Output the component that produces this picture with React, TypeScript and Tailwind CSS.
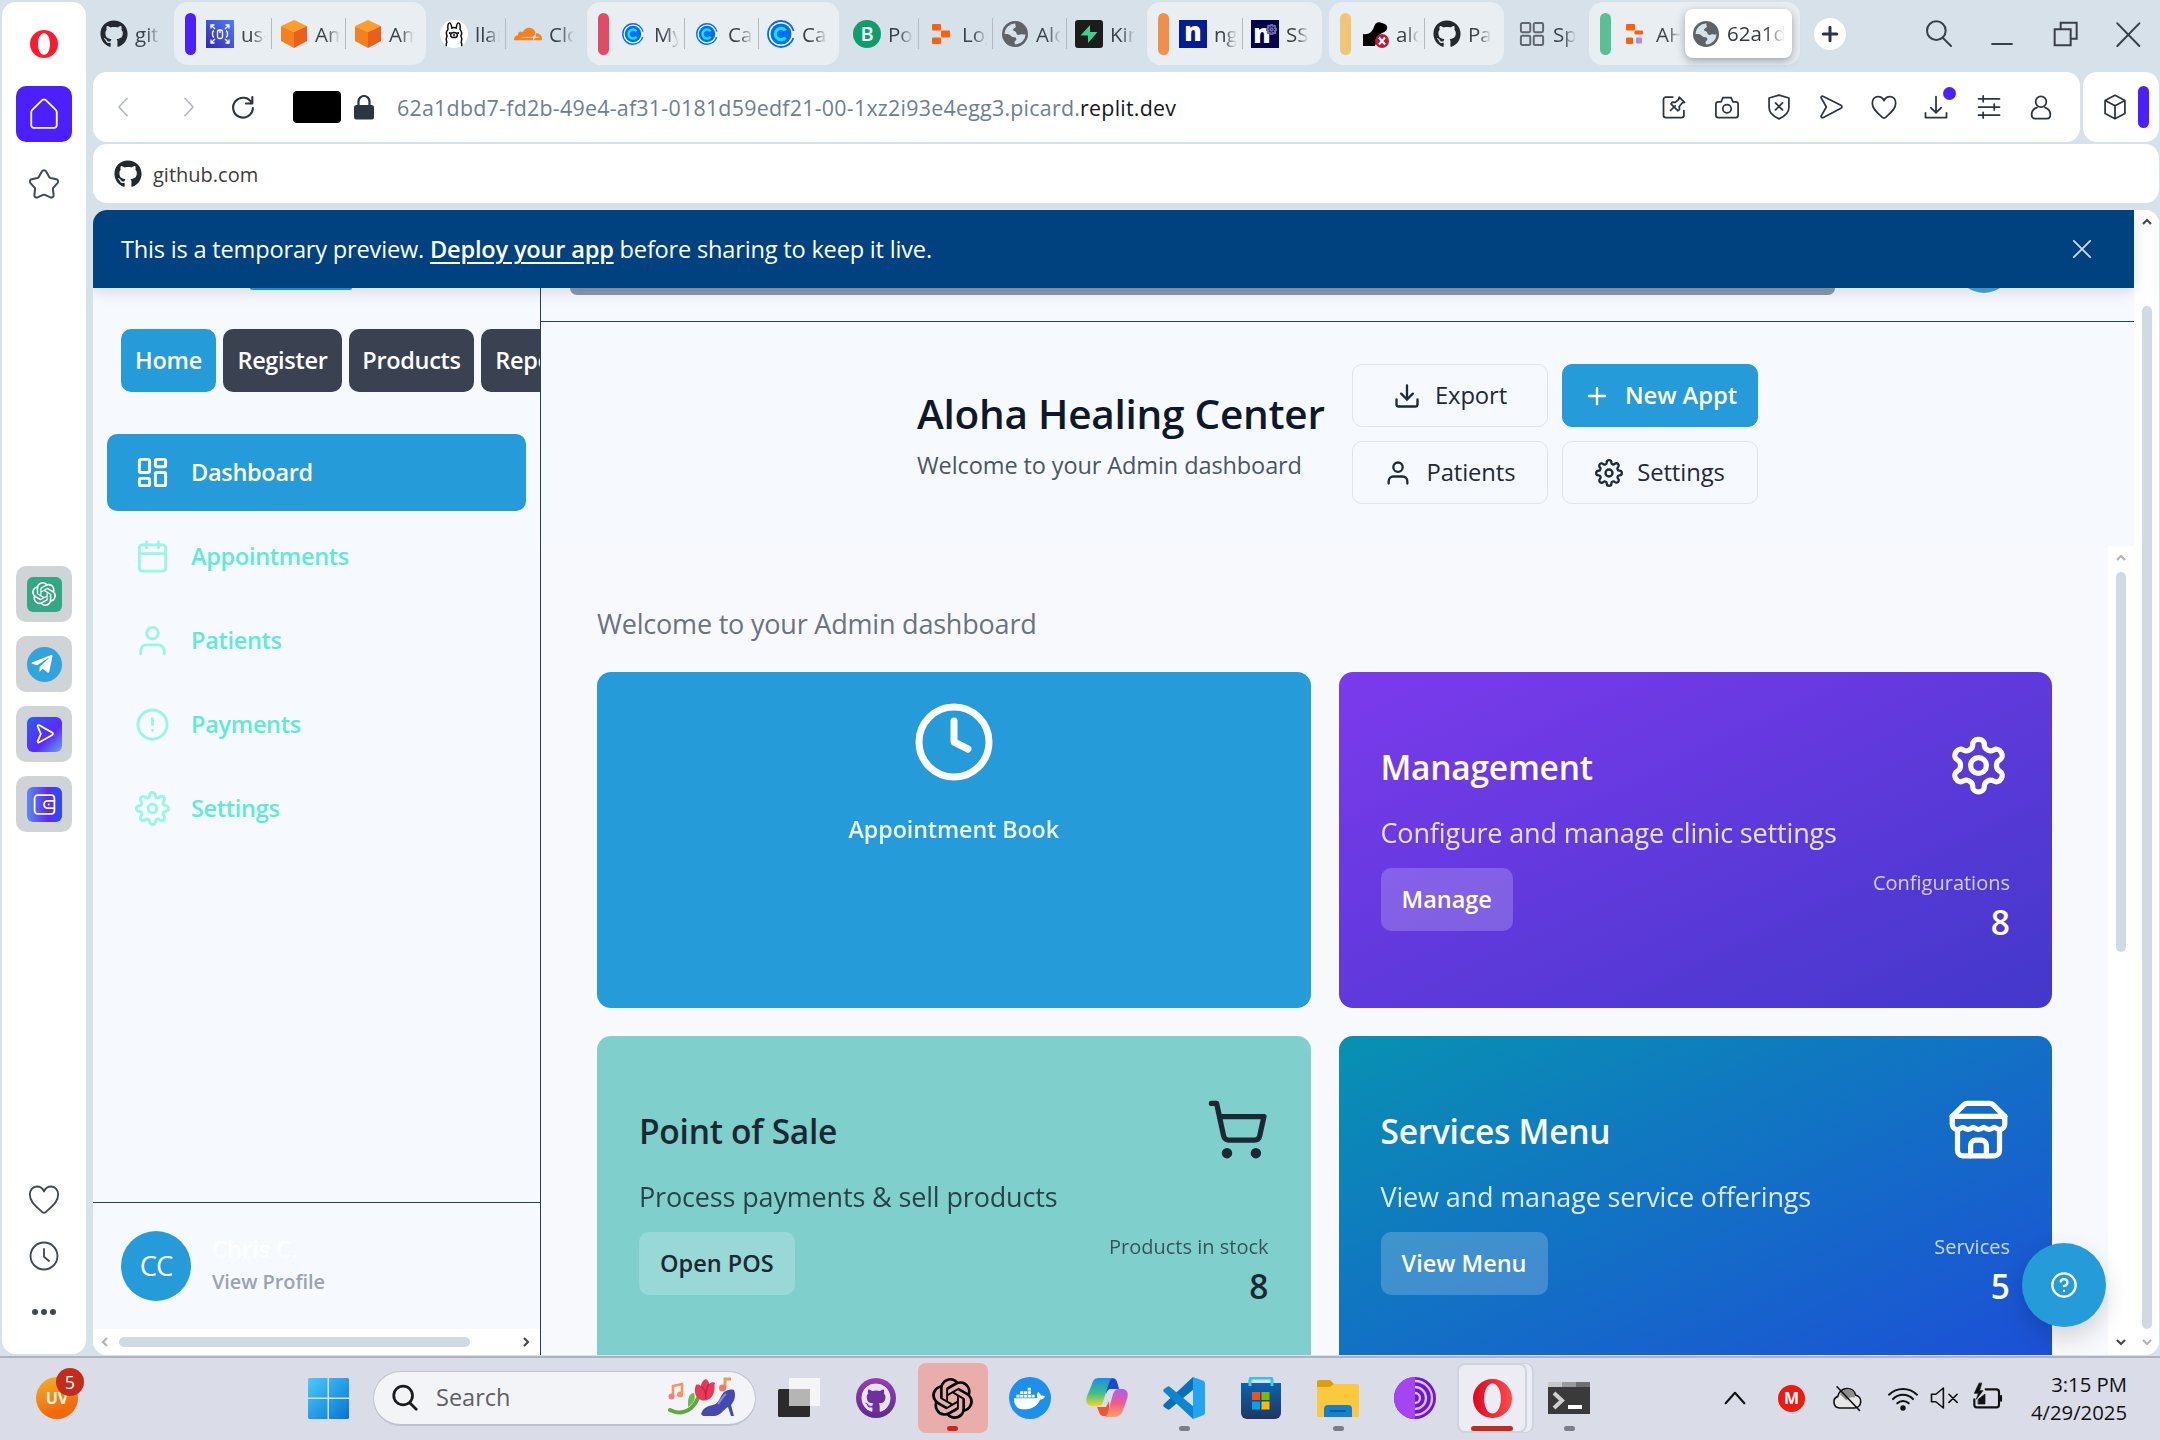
import React from "react";
import { LayoutDashboard, ShoppingCart, Clock } from "lucide-react";
import { FiSettings, FiCalendar, FiUser, FiAlertCircle, FiDownload, FiPlus, FiHelpCircle } from "react-icons/fi";
import { FaGithub, FaTelegramPlane, FaDocker } from "react-icons/fa";
import { SiOpenai, SiCloudflare } from "react-icons/si";

type Kids = { children?: React.ReactNode; className?: string };

/* ---------- generic line icon ---------- */
function Line({ size = 28, w = 1.5, children, className = "", box = "0 0 24 24" }: Kids & { size?: number; w?: number; box?: string }) {
  return (
    <svg width={size} height={size} viewBox={box} fill="none" stroke="currentColor" strokeWidth={w} strokeLinecap="round" strokeLinejoin="round" className={"shrink-0 " + className}>
      {children}
    </svg>
  );
}

/* ---------- favicons ---------- */
const Octo = () => <FaGithub size={28} className="text-[#24292f]" />;

const AwsChip = () => (
  <svg width="28" height="28" viewBox="0 0 28 28">
    <defs>
      <linearGradient id="chip" x1="0" y1="1" x2="1" y2="0">
        <stop offset="0" stopColor="#2e27ad" />
        <stop offset="1" stopColor="#527fff" />
      </linearGradient>
    </defs>
    <rect width="28" height="28" fill="url(#chip)" />
    <g fill="none" stroke="#fff" strokeWidth="1.3">
      <path d="M5 8.500V5h3.500M5 5l4 4M19.500 5H23v3.500M23 5l-4 4M5 19.500V23h3.500M5 23l4-4M23 19.500V23h-3.500M23 23l-4-4" />
      <rect x="11.500" y="10" width="5" height="8.500" rx="1.800" />
      <path d="M8 11c-1.500 0-1.500 1-1.500 3s0 3 1.500 3M20 11c1.500 0 1.500 1 1.500 3s0 3-1.500 3M14 10v3" />
    </g>
  </svg>
);

const AwsCube = () => (
  <svg width="28" height="28" viewBox="0 0 28 28">
    <path d="M14 0l13 6-13 6L1 6z" fill="#ff9d2b" />
    <path d="M1 6l13 6v16L1 21z" fill="#f58020" />
    <path d="M27 6l-13 6v16l13-7z" fill="#ec5e1c" />
  </svg>
);

const Llama = () => (
  <svg width="28" height="28" viewBox="0 0 28 28">
    <circle cx="14" cy="14" r="14" fill="#fff" />
    <g fill="none" stroke="#111" strokeWidth="1.500" strokeLinecap="round">
      <path d="M8 9.500C7.500 6 8 3 9.500 3s2 2.500 2.300 5c1.300-.7 3-.7 4.400 0 .3-2.500.8-5 2.300-5s2 3 1.500 6.500c1.700 1.700 2 4.300.9 6.300 1.200 2.200 1.200 4.600.3 6.600.5 1 .7 2 .5 3.200M8 9.500c-1.700 1.700-2 4.300-.9 6.300-1.200 2.200-1.200 4.600-.3 6.600-.5 1-.7 2-.5 3.200" />
      <ellipse cx="14" cy="15" rx="3.400" ry="2.600" />
      <path d="M14 14.500v1.200" />
    </g>
    <circle cx="9.800" cy="13" r="1" />
    <circle cx="18.200" cy="13" r="1" />
  </svg>
);

function Cal({ size }: { size: number }) {
  return (
    <svg width={size} height={size} viewBox="0 0 28 28">
      <circle cx="14" cy="14" r="13" fill="#fff" stroke="#006bff" strokeWidth="1.800" strokeDasharray="74 8" strokeDashoffset="-4" />
      <circle cx="14" cy="14" r="10.500" fill="#006bff" />
      <path d="M18.500 10.500a5.700 5.700 0 1 0 0 7" fill="none" stroke="#0ae8f0" strokeWidth="3.200" />
    </svg>
  );
}

const BDot = () => <span className="grid size-7 place-items-center rounded-full bg-[#0f9d6c] text-[20px] leading-none font-semibold text-white">B</span>;

function Replit({ purple = false }: { purple?: boolean }) {
  return (
    <svg width="28" height="28" viewBox="0 0 28 28" fill="#ff5f0a">
      <rect x="5" y="4" width="9" height="6.500" rx="1" />
      <rect x={purple ? 13.5 : 14} y="10.500" width={purple ? 8.5 : 9} height={purple ? 4 : 7} rx="1" />
      <rect x="5" y="17.500" width={purple ? 7 : 9} height="6.500" rx="1" />
      {purple && <rect x="15" y="17.500" width="6" height="6" rx="1" fill="#a78bfa" />}
    </svg>
  );
}

const Globe = () => (
  <svg width="26" height="26" viewBox="0 0 24 24">
    <circle cx="12" cy="12" r="12" fill="#5f6368" />
    <path d="M12.500 2.300c-.8 1.500.6 2 .2 3.200-.5 1.300-2.700 1.200-2.500 2.800.1 1.200 2 .8 2.700 1.900.6 1 .2 2.200 1.500 2.600 1.600.4 3-.9 5-.3.9.2 1.600.2 2.300-.5A9.700 9.700 0 0 1 12.400 21.700c-.9-1.200-1.600-2 .3-3.600 1-.9.6-2.600-.6-3-1.600-.6-2.900-.1-4-1.600-.9-1.200-2.500-1.600-5.700-1.500A9.700 9.700 0 0 1 12.500 2.300z" fill="#d7e1ea" />
  </svg>
);

const Bolt = () => (
  <svg width="28" height="28" viewBox="0 0 28 28">
    <rect width="28" height="28" rx="3" fill="#1c1c1c" />
    <path d="M15 5L5.500 15.500H13V23l9.500-11H15z" fill="#3ecf8e" />
  </svg>
);

const NBox = ({ gear = false }: { gear?: boolean }) => (
  <span className={"relative flex size-7 justify-center " + (gear ? "bg-[#030050]" : "bg-[#051d94]")}>
    <span className={"text-[26px] leading-[22px] font-extrabold text-white " + (gear ? "mt-0.5 -ml-1.5" : "")}>n</span>
    {gear && <FiSettings size={11} className="absolute top-1 right-0.5 text-[#6a69a8]" strokeWidth={4} />}
  </span>
);

const AlohaFav = () => (
  <svg width="28" height="28" viewBox="0 0 28 28">
    <path d="M2 26V14c6 1 9-2 11-7 1-4 4-6 8-4 4 1 6 3 5 6-1 4-7 3-9 8-1 3-2 6-3 9z" fill="#000" />
    <circle cx="21" cy="21" r="7" fill="#b91c3a" />
    <path d="M18 17.500l6 7M24 17.500l-6 7" stroke="#fff" strokeWidth="2" />
  </svg>
);

const Grid4 = () => (
  <Line size={28} w={1.7} className="text-[#5f666d]">
    <rect x="2.500" y="2.500" width="8" height="8" rx="1.200" />
    <rect x="13.500" y="2.500" width="8" height="8" rx="1.200" />
    <rect x="2.500" y="13.500" width="8" height="8" rx="1.200" />
    <rect x="13.500" y="13.500" width="8" height="8" rx="1.200" />
  </Line>
);

/* ---------- tab strip ---------- */
function Tab({ icon, label, className = "w-[60px]" }: { icon: React.ReactNode; label: string; className?: string }) {
  return (
    <div className={"flex h-8 shrink-0 items-center gap-[7px] " + className}>
      <span className="grid size-7 shrink-0 place-items-center">{icon}</span>
      <span className="min-w-0 flex-1 overflow-hidden text-[20.5px] leading-8 whitespace-nowrap text-[#3a4249] [mask-image:linear-gradient(to_right,black_45%,transparent)]">{label}</span>
    </div>
  );
}
const Sep = () => <span className="mr-2 ml-[5px] h-[31px] w-px shrink-0 bg-[#b3bac1]" />;

function Group({ color, className = "", children }: Kids & { color: string }) {
  return (
    <div className={"flex h-[63px] shrink-0 items-center rounded-[14px] bg-[#e9eef3] pl-[11px] " + className}>
      <span className={"mr-2.5 h-[42px] w-[11px] shrink-0 rounded-full " + color} />
      {children}
    </div>
  );
}

function TabStrip() {
  return (
    <div className="flex h-[72px] items-start pt-0.5 pl-[7px]">
      <div className="flex h-[63px] items-center">
        <Tab icon={<Octo />} label="gith" />
        <Group color="bg-[#4c1fff]" className="ml-3.5 w-[252px]">
          <Tab icon={<AwsChip />} label="us-" />
          <Sep />
          <Tab icon={<AwsCube />} label="Am" />
          <Sep />
          <Tab icon={<AwsCube />} label="Am" />
        </Group>
        <div className="flex items-center pl-3.5">
          <Tab icon={<Llama />} label="llam" />
          <Sep />
          <Tab icon={<SiCloudflare size={28} className="text-[#f6821f]" />} label="Clou" />
        </div>
        <Group color="bg-[#e04c63]" className="ml-[13px] w-[252px]">
          <Tab icon={<Cal size={22} />} label="My" />
          <Sep />
          <Tab icon={<Cal size={22} />} label="Cal" />
          <Sep />
          <Tab icon={<Cal size={28} />} label="Cal" />
        </Group>
        <div className="flex items-center pl-3.5">
          <Tab icon={<BDot />} label="Po" />
          <Sep />
          <Tab icon={<Replit />} label="Log" />
          <Sep />
          <Tab icon={<Globe />} label="Alo" />
          <Sep />
          <Tab icon={<Bolt />} label="Kin" />
        </div>
        <Group color="bg-[#f08f4c]" className="ml-3 w-[175px]">
          <Tab icon={<NBox />} label="ng" className="w-[58px]" />
          <Sep />
          <Tab icon={<NBox gear />} label="SS" className="w-[58px]" />
        </Group>
        <Group color="bg-[#efc677]" className="ml-[7px] w-[175px]">
          <Tab icon={<AlohaFav />} label="alo" className="w-[58px]" />
          <Sep />
          <Tab icon={<Octo />} label="Pa" className="w-[58px]" />
        </Group>
        <div className="pl-3.5">
          <Tab icon={<Grid4 />} label="Sp" className="w-[58px]" />
        </div>
        <Group color="bg-[#57c096]" className="ml-[13px] w-[211px]">
          <Tab icon={<Replit purple />} label="AH" className="w-[60px]" />
          <div className="ml-1 flex h-[49px] w-[107px] shrink-0 items-center gap-2 rounded-lg bg-white pl-2 shadow-[0_3px_8px_rgba(60,70,80,0.45)]">
            <Globe />
            <span className="w-[58px] overflow-hidden text-[20.5px] whitespace-nowrap text-[#33393f] [mask-image:linear-gradient(to_right,black_65%,transparent)]">62a1dbd</span>
          </div>
        </Group>
        <span className="ml-3.5 grid size-8 place-items-center rounded-full bg-white text-[#2b3640]">
          <Line size={18} w={4}>
            <path d="M12 3v18M3 12h18" />
          </Line>
        </span>
        <div className="ml-[77px] flex items-center text-[#3a3f45]">
          <Line size={32} w={1.5}>
            <circle cx="10" cy="9.500" r="7" />
            <path d="M15 15l6 6" />
          </Line>
          <Line size={32} w={1.5} className="ml-[31px]">
            <path d="M4 19.500h16" strokeLinecap="butt" />
          </Line>
          <Line size={32} w={1.5} className="ml-8">
            <path d="M3.500 8.500h12v12h-12zM8 8.500v-5h12v12h-4.500" strokeLinejoin="miter" />
          </Line>
          <Line size={32} w={1.5} className="ml-[30px]">
            <path d="M4 4l16.500 17M20.500 4L4 21" />
          </Line>
        </div>
      </div>
    </div>
  );
}

/* ---------- address bar ---------- */
function AddressBar() {
  return (
    <div className="flex h-[70px] gap-[3px]">
      <div className="flex w-[1987px] items-center rounded-[14px] bg-white pl-4 text-[#2b3640]">
        <Line size={28} w={1.4} className="text-[#b4b9be]">
          <path d="M15.500 4.500L8.500 12l7 7.500" />
        </Line>
        <Line size={28} w={1.4} className="ml-[38px] text-[#b4b9be]">
          <path d="M8.500 4.500l7 7.500-7 7.500" />
        </Line>
        <Line size={28} w={1.8} className="ml-[26px]">
          <path d="M19.500 8.500A8.500 8.500 0 1 0 20.500 13M20 3.500V9h-5.500" />
        </Line>
        <span className="ml-9 h-8 w-12 rounded-[4px] bg-black" />
        <svg width="20" height="25" viewBox="0 0 20 25" className="ml-[13px]" fill="none">
          <rect y="10" width="20" height="14.500" rx="2.500" fill="#2b3640" />
          <path d="M4.500 11V6.500a5.500 5.500 0 0 1 11 0V11" stroke="#2b3640" strokeWidth="2.200" />
        </svg>
        <span className="ml-[23px] flex-1 pt-0.5 text-[21.4px] leading-[30px] tracking-[0.25px] whitespace-nowrap text-[#6d8091]">
          62a1dbd7-fd2b-49e4-af31-0181d59edf21-00-1xz2i93e4egg3.picard.<span className="text-[#15181c]">replit.dev</span>
        </span>
        <div className="flex items-center gap-[24.4px] pr-[25px]">
          <Line>
            <path d="M11 3.500H5a2 2 0 0 0-2 2V19a2 2 0 0 0 2 2h13.500a2 2 0 0 0 2-2v-4M9 15l4-4M16.500 3.500l4.500 4.500-2 .6-2.500 3 .2 2.600-1.500 1-5.800-5.800 1-1.500 2.600.2 3-2.500z" />
          </Line>
          <Line>
            <path d="M2.500 9.500a2 2 0 0 1 2-2H7l1.500-3.500h7L17 7.500h2.500a2 2 0 0 1 2 2V19a2 2 0 0 1-2 2h-15a2 2 0 0 1-2-2z" />
            <circle cx="12" cy="13.500" r="3.600" />
          </Line>
          <Line>
            <path d="M12 1.800l8.500 2.500v8.200c0 4-3.500 7.500-8.500 9.700-5-2.200-8.500-5.700-8.500-9.700V4.300zM9 8.500l6 6M15 8.500l-6 6" />
          </Line>
          <Line>
            <path d="M3.500 4c0-1.200 1-1.500 2-1l15 7.500c1.200.7 1.200 1.800 0 2.500l-15 8c-1.200.5-2 0-2-1.200L8 12z" />
          </Line>
          <Line>
            <path d="M12 6.500C11 4 9.300 3 7 3 4 3 2 5.500 2 8.700 2 14 6.500 17 10.500 20.800a2 2 0 0 0 3 0C17.500 17 22 14 22 8.700 22 5.500 20 3 17 3c-2.300 0-4 1-5 3.500z" />
          </Line>
          <span className="relative">
            <Line>
              <path d="M12 3v13.500M7.500 12.500L12 17l4.500-4.500M3 17v4h18v-4" />
            </Line>
            <span className="absolute -top-1.5 -right-1.5 size-[13px] rounded-full bg-[#4c1fff]" />
          </span>
          <Line>
            <path d="M3 5h18M3 12h18M3 19h18M7 2.500v5M16.500 9.500v5M7 16.500v5" />
          </Line>
          <Line>
            <circle cx="12" cy="7.500" r="4.600" />
            <path d="M8.500 12.500C5.500 13.500 4 16 4 18.500 4 20.500 5 22 7 22h10c2 0 3-1.500 3-3.500 0-2.500-1.500-5-4.500-6" />
          </Line>
        </div>
      </div>
      <div className="flex flex-1 items-center rounded-[14px] bg-white pl-[18px] text-[#2b3640]">
        <Line>
          <path d="M12 2l8.500 4.500v11L12 22l-8.500-4.500v-11zM3.500 6.500L12 11l8.500-4.500M12 11v11" />
        </Line>
        <span className="ml-[9px] h-[42px] w-[11px] rounded-full bg-[#4c1fff]" />
      </div>
    </div>
  );
}

/* ---------- browser side rail ---------- */
function Opera({ size, from = "#ff1b2d", to = "#ff1b2d" }: { size: number; from?: string; to?: string }) {
  const id = "op" + size;
  return (
    <svg width={size} height={size} viewBox="0 0 28 28">
      <defs>
        <linearGradient id={id}>
          <stop offset="0" stopColor={from} />
          <stop offset="1" stopColor={to} />
        </linearGradient>
      </defs>
      <path fillRule="evenodd" fill={`url(#${id})`} d="M14 0a14 14 0 1 0 0 28 14 14 0 1 0 0-28zm0 3.200c3.700 0 6 5 6 10.800s-2.300 10.800-6 10.800-6-5-6-10.800 2.300-10.800 6-10.800z" />
    </svg>
  );
}

const AppTile = ({ children, className = "" }: Kids) => (
  <span className="grid size-14 place-items-center rounded-[10px] bg-[#d0d4d7]">
    <span className={"grid size-[35px] place-items-center text-white " + className}>{children}</span>
  </span>
);

function Rail() {
  return (
    <div className="mt-0.5 ml-0.5 flex h-[1352px] w-[84px] shrink-0 flex-col items-center rounded-[14px] bg-white pt-7 text-[#3f4a54]">
      <Opera size={28} />
      <span className="mt-7 grid size-14 place-items-center rounded-[10px] bg-[#4c1fff] text-white">
        <Line size={34} w={1.3}>
          <path d="M3 10.800a2.500 2.500 0 0 1 .7-1.700l7-6.900a1.800 1.800 0 0 1 2.600 0l7 6.900a2.500 2.500 0 0 1 .7 1.700V20a1.800 1.800 0 0 1-1.800 1.800H4.800A1.800 1.800 0 0 1 3 20z" />
        </Line>
      </span>
      <Line size={34} w={1.4} className="mt-[25px]">
        <path d="M10.500 3.200a1.700 1.700 0 0 1 3 0l2.200 3.900c.2.400.6.600 1 .7l4 .9a1.600 1.600 0 0 1 .8 2.700l-2.800 3.100c-.3.300-.4.700-.4 1.100l.5 4.200a1.600 1.600 0 0 1-2.300 1.600L12.700 19.700a1.700 1.700 0 0 0-1.400 0L7.500 21.400a1.600 1.600 0 0 1-2.300-1.600l.5-4.200c0-.4-.1-.8-.4-1.100L2.500 11.400a1.600 1.600 0 0 1 .8-2.700l4-.9c.4-.1.800-.3 1-.7z" />
      </Line>
      <div className="mt-[365px] flex flex-col gap-3.5">
        <AppTile className="rounded-md bg-[#35a785]">
          <SiOpenai size={24} />
        </AppTile>
        <AppTile className="rounded-full bg-[#32a4dd]">
          <FaTelegramPlane size={24} className="-ml-1" />
        </AppTile>
        <AppTile className="rounded-md bg-[linear-gradient(135deg,#2a5bff,#5a2bf5_60%,#6aa6f5)]">
          <Line size={22} w={2}>
            <path d="M5 3.500c0-1.200 1-1.500 2-1l14 8c1 .6 1 1.900 0 2.500l-14 8c-1 .5-2 .2-2-1L8.500 12z" />
          </Line>
        </AppTile>
        <AppTile className="rounded-md bg-[linear-gradient(90deg,#5a8bf5,#5a2bf5_60%,#2a4bff)]">
          <Line size={25} w={1.7}>
            <rect x="2.500" y="3" width="19" height="18" rx="3" />
            <path d="M21.500 8.500H15a3.500 3.500 0 0 0 0 7h6.500M16 12h.1" />
          </Line>
        </AppTile>
      </div>
      <Line size={34} w={1.3} className="mt-[351px]">
        <path d="M12 6C11 3.500 9.300 2.500 7 2.500 4 2.500 2 5 2 8.200c0 5.300 4.500 8.300 8.500 12.100a2 2 0 0 0 3 0c4-3.800 8.500-6.800 8.500-12.100 0-3.200-2-5.700-5-5.700-2.300 0-4 1-5 3.500z" />
      </Line>
      <Line size={34} w={1.3} className="mt-[22px]">
        <circle cx="12" cy="12" r="9.500" />
        <path d="M12 7v5.500l3.500 3" />
      </Line>
      <span className="mt-9 flex gap-[3px]">
        <i className="size-1.5 rounded-full bg-current" />
        <i className="size-1.5 rounded-full bg-current" />
        <i className="size-1.5 rounded-full bg-current" />
      </span>
    </div>
  );
}

/* ---------- app sidebar ---------- */
const Pill = ({ children, className = "" }: Kids) => (
  <span className={"grid h-[63px] shrink-0 place-items-center rounded-[10px] text-[23.5px] font-[650] tracking-[-0.3px] text-white " + className}>{children}</span>
);

function NavItem({ icon, label, active = false }: { icon: React.ReactNode; label: string; active?: boolean }) {
  return (
    <div className={"flex h-[77px] items-center gap-[21px] rounded-[10px] pl-7 text-[23.5px] font-[650] tracking-[-0.3px] " + (active ? "bg-[#269bda] text-white" : "text-[#5eead4]")}>
      <span className={active ? "text-white" : "text-[#99f6e4]"}>{icon}</span>
      {label}
    </div>
  );
}

const Caret = ({ d, className = "" }: { d: string; className?: string }) => (
  <svg width="10" height="10" viewBox="0 0 10 10" fill="none" stroke="currentColor" strokeWidth="2.200" className={className}>
    <path d={d} />
  </svg>
);

function AppSidebar() {
  return (
    <aside className="flex w-[448px] shrink-0 flex-col overflow-hidden border-r border-[#27405a] bg-[#f6fafe]">
      <div className="ml-[157px] h-[2px] w-[102px] shrink-0 rounded-b-md bg-[#269bda]" />
      <div className="mt-[39px] ml-7 flex shrink-0 gap-[7px]">
        <Pill className="w-[95px] bg-[#269bda]">Home</Pill>
        <Pill className="w-[119px] bg-[#3a4252]">Register</Pill>
        <Pill className="w-[125px] bg-[#3a4252]">Products</Pill>
        <Pill className="w-[115px] bg-[#3a4252]">Reports</Pill>
      </div>
      <nav className="mx-3.5 mt-[42px] flex flex-1 flex-col gap-[7px]">
        <NavItem active icon={<LayoutDashboard size={35} />} label="Dashboard" />
        <NavItem icon={<FiCalendar size={35} />} label="Appointments" />
        <NavItem icon={<FiUser size={35} />} label="Patients" />
        <NavItem icon={<FiAlertCircle size={35} />} label="Payments" />
        <NavItem icon={<FiSettings size={35} />} label="Settings" />
      </nav>
      <div className="flex h-[127px] shrink-0 items-center border-t border-[#27405a] pl-7">
        <span className="grid size-[70px] place-items-center rounded-full bg-[#269bda] text-[27.5px] tracking-[-1px] text-white">CC</span>
        <div className="ml-[21px] flex flex-col pb-1 font-semibold">
          <span className="text-[23.5px] leading-[35px] text-white">Chris C.</span>
          <span className="text-[20px] leading-[30px] tracking-[-0.1px] text-[#9ca3af]">View Profile</span>
        </div>
      </div>
      <div className="flex h-[26px] shrink-0 items-center bg-white pl-[7px]">
        <Caret d="M7 1L3 5l4 4" className="text-[#b4b4b4]" />
        <span className="ml-[9px] h-2.5 w-[351px] rounded-full bg-[#d0dae3]" />
        <Caret d="M3 1l4 4-4 4" className="ml-[51px] text-[#4a4a4a]" />
      </div>
    </aside>
  );
}

/* ---------- dashboard ---------- */
const HeadBtn = ({ children, className = "" }: Kids) => (
  <span className={"flex h-[63px] w-[196px] items-center justify-center gap-3.5 rounded-[10px] border text-[23.8px] tracking-[-0.1px] " + className}>{children}</span>
);

const GearLobes = () => (
  <Line size={63} w={2}>
    <path d="M12.220 2h-.44a2 2 0 0 0-2 2v.18a2 2 0 0 1-1 1.730l-.43.25a2 2 0 0 1-2 0l-.15-.08a2 2 0 0 0-2.730.73l-.22.38a2 2 0 0 0 .73 2.730l.15.1a2 2 0 0 1 1 1.720v.51a2 2 0 0 1-1 1.740l-.15.09a2 2 0 0 0-.73 2.730l.22.38a2 2 0 0 0 2.730.73l.15-.08a2 2 0 0 1 2 0l.43.25a2 2 0 0 1 1 1.730V20a2 2 0 0 0 2 2h.44a2 2 0 0 0 2-2v-.18a2 2 0 0 1 1-1.730l.43-.25a2 2 0 0 1 2 0l.15.08a2 2 0 0 0 2.730-.73l.22-.39a2 2 0 0 0-.73-2.730l-.15-.08a2 2 0 0 1-1-1.740v-.5a2 2 0 0 1 1-1.740l.15-.09a2 2 0 0 0 .73-2.730l-.22-.38a2 2 0 0 0-2.730-.73l-.15.08a2 2 0 0 1-2 0l-.43-.25a2 2 0 0 1-1-1.730V4a2 2 0 0 0-2-2z" />
    <circle cx="12" cy="12" r="3" />
  </Line>
);

const Shop = () => (
  <Line size={63} w={2}>
    <path d="m2 7 4.410-4.410A2 2 0 0 1 7.830 2h8.340a2 2 0 0 1 1.420.59L22 7" />
    <path d="M4 12v8a2 2 0 0 0 2 2h12a2 2 0 0 0 2-2v-8" />
    <path d="M15 22v-4a2 2 0 0 0-2-2h-2a2 2 0 0 0-2 2v4" />
    <path d="M2 7h20" />
    <path d="M22 7v3a2 2 0 0 1-2 2a2.700 2.700 0 0 1-1.590-.63.7.7 0 0 0-.82 0A2.700 2.700 0 0 1 16 12a2.700 2.700 0 0 1-1.590-.63.7.7 0 0 0-.82 0A2.700 2.700 0 0 1 12 12a2.700 2.700 0 0 1-1.590-.63.7.7 0 0 0-.82 0A2.700 2.700 0 0 1 8 12a2.700 2.700 0 0 1-1.590-.63.7.7 0 0 0-.82 0A2.700 2.700 0 0 1 4 12a2 2 0 0 1-2-2V7" />
  </Line>
);

function Card(p: { title: string; desc: string; button: string; stat: string; value: string; icon: React.ReactNode; className: string }) {
  return (
    <div className={"flex h-[336px] flex-col rounded-[14px] px-[42px] " + p.className}>
      <div className="mt-[62px] flex h-[63px] items-center justify-between">
        <h3 className="pt-1 text-[33.5px] leading-[49px] font-semibold tracking-[-0.25px]">{p.title}</h3>
        {p.icon}
      </div>
      <p className="mt-[15px] text-[27px] leading-[42px] tracking-[-0.15px] opacity-85">{p.desc}</p>
      <div className="mt-[14px] flex items-start justify-between">
        <span className="flex h-[63px] items-center rounded-[10px] bg-white/20 px-[21px] text-[23.5px] font-semibold">{p.button}</span>
        <div className="flex flex-col items-end">
          <span className="text-[20px] leading-[30px] opacity-75">{p.stat}</span>
          <span className="text-[33.5px] leading-[49px] font-semibold">{p.value}</span>
        </div>
      </div>
    </div>
  );
}

function Dashboard() {
  return (
    <main className="flex min-w-0 flex-1 flex-col bg-[#f8f9fc]">
      <div className="flex h-[34px] shrink-0 items-start border-b border-[#27405a] bg-[#f6fafe]">
        <span className="ml-[29px] h-[7px] w-[1265px] rounded-b-lg bg-[#8b9bad]" />
        <span className="ml-[126px] flex h-[5px] w-[45px] items-end justify-center overflow-hidden">
          <i className="size-14 shrink-0 rounded-full bg-[#45a6da]" />
        </span>
      </div>
      <div className="flex h-56 shrink-0 items-start justify-center gap-7 bg-[#f6fafe] pt-[42px]">
        <div className="flex w-[407px] flex-col pt-[22px]">
          <h1 className="text-[40.5px] leading-[56px] font-semibold tracking-[-0.25px] whitespace-nowrap text-[#0f172a]">Aloha Healing Center</h1>
          <p className="mt-1.5 text-[23.5px] leading-[35px] tracking-[-0.1px] whitespace-nowrap text-[#4b5563]">Welcome to your Admin dashboard</p>
        </div>
        <div className="grid grid-cols-2 gap-3.5">
          <HeadBtn className="border-[#dbe5f0] font-medium text-[#1e293b]">
            <FiDownload size={28} />
            Export
          </HeadBtn>
          <HeadBtn className="border-[#269bda] bg-[#269bda] font-semibold text-white">
            <FiPlus size={28} />
            New Appt
          </HeadBtn>
          <HeadBtn className="border-[#dbe5f0] font-medium text-[#1e293b]">
            <FiUser size={28} />
            Patients
          </HeadBtn>
          <HeadBtn className="border-[#dbe5f0] font-medium text-[#1e293b]">
            <FiSettings size={28} />
            Settings
          </HeadBtn>
        </div>
      </div>
      <div className="flex min-h-0 flex-1">
        <div className="flex min-w-0 flex-1 flex-col overflow-hidden pt-14 pr-14 pl-14">
          <p className="h-[70px] shrink-0 text-[27px] leading-[44px] tracking-[-0.2px] text-[#6b7280]">Welcome to your Admin dashboard</p>
          <div className="grid shrink-0 grid-cols-2 gap-7">
            <div className="flex h-[336px] flex-col items-center rounded-[14px] bg-[#269bda] pt-7 text-white">
              <Clock size={84} />
              <span className="mt-[28px] text-[23.3px] leading-[35px] font-[650] tracking-[-0.1px] opacity-90">Appointment Book</span>
            </div>
            <Card title="Management" desc="Configure and manage clinic settings" button="Manage" stat="Configurations" value="8" icon={<GearLobes />} className="bg-[linear-gradient(to_bottom_right,#7c3aed,#4338ca)] text-white" />
            <Card title="Point of Sale" desc="Process payments & sell products" button="Open POS" stat="Products in stock" value="8" icon={<ShoppingCart size={63} />} className="bg-[#7fcfcd] text-[#1c2833]" />
            <Card title="Services Menu" desc="View and manage service offerings" button="View Menu" stat="Services" value="5" icon={<Shop />} className="bg-[linear-gradient(to_bottom_right,#0891b2,#1d4ed8)] text-white" />
          </div>
        </div>
        <div className="flex w-[26px] shrink-0 flex-col items-center bg-white">
          <Caret d="M1 7l4-4 4 4" className="mt-[7px] shrink-0 text-[#b4b4b4]" />
          <span className="mt-[9px] h-[380px] w-2.5 shrink-0 rounded-full bg-[#d0dae3]" />
          <Caret d="M1 3l4 4 4-4" className="mt-auto mb-2 shrink-0 text-[#4a4a4a]" />
        </div>
      </div>
    </main>
  );
}

function Page() {
  return (
    <div className="relative mt-[7px] flex h-[1145px] overflow-hidden rounded-[14px] bg-white">
      <div className="flex min-w-0 flex-1 flex-col">
        <div className="z-10 flex h-[78px] shrink-0 items-center justify-between bg-[#00417f] pr-[38px] pl-7 text-white shadow-[0_4px_14px_rgba(0,0,0,0.13)]">
          <p className="pt-0.5 text-[23.6px] tracking-[-0.2px]">
            This is a temporary preview. <b className="font-[650] underline underline-offset-4">Deploy your app</b> before sharing to keep it live.
          </p>
          <Line size={28} w={1.6} className="opacity-80">
            <path d="M5 5l14 14M19 5L5 19" />
          </Line>
        </div>
        <div className="flex min-h-0 flex-1">
          <AppSidebar />
          <Dashboard />
        </div>
      </div>
      <div className="flex w-[25px] shrink-0 flex-col items-center bg-white">
        <Caret d="M1 7l4-4 4 4" className="mt-[7px] shrink-0 text-[#4a4a4a]" />
        <span className="mt-[79px] h-[1023px] w-2.5 shrink-0 rounded-full bg-[#d0dae3]" />
        <Caret d="M1 3l4 4 4-4" className="mt-auto mb-2 shrink-0 text-[#b4b4b4]" />
      </div>
      <span className="absolute right-[53px] bottom-7 z-20 grid size-[84px] place-items-center rounded-full bg-[#269bda] text-white shadow-[0_10px_24px_rgba(0,0,0,0.16)]">
        <FiHelpCircle size={28} />
      </span>
    </div>
  );
}

/* ---------- taskbar ---------- */
function Doodle() {
  return (
    <svg width="78" height="42" viewBox="0 0 78 42" fill="none">
      <path d="M2 33c10 5 20 2 26-8 2-4 4-8 6-12" stroke="#5fa744" strokeWidth="4" strokeLinecap="round" />
      <path d="M20 26c0-6 2-10 6-10 2 5 0 10-6 14z" fill="#6dbb4a" />
      <path d="M28 8c2-1 4 0 5 1 0-3 2-6 5-7 2 1 3 3 3 5 2-2 5-2 6-1-1 3 0 5-1 9-2 7-8 10-13 8s-8-8-5-15z" fill="#e83a58" />
      <path d="M33 9c3 2 5 6 5 13M41 7c-2 3-3 7-3 11" stroke="#c62447" strokeWidth="1.500" />
      <path d="M33 37c2-6 6-8 12-9 6-1 7-9 11-13 3-2 7-3 10-2 2 5 1 10-3 15l3 11h-3l-3-9c-5 3-8 9-14 9H35z" fill="#444ab0" />
      <path d="M50 27c3-4 5-8 8-10" stroke="#8b8fe0" strokeWidth="2" />
      <path d="M5 19V9l9-2v10" stroke="#f4955f" strokeWidth="2.600" />
      <circle cx="3.500" cy="19.500" r="3" fill="#f07b8c" />
      <circle cx="12" cy="17.500" r="3" fill="#f4955f" />
      <path d="M57 11V2h6" stroke="#f4955f" strokeWidth="3" />
      <circle cx="54.500" cy="11" r="3.500" fill="#f07b5f" />
    </svg>
  );
}

const Slot = ({ children, dot = "", className = "" }: Kids & { dot?: string }) => (
  <span className="relative grid h-[70px] w-[77.1px] shrink-0 place-items-center">
    <span className={"grid h-[70px] w-[70px] place-items-center rounded-[8px] " + className}>{children}</span>
    {dot && <i className={"absolute bottom-0.5 h-[5px] rounded-full " + dot} />}
  </span>
);

function Taskbar() {
  return (
    <div className="flex h-[84px] shrink-0 items-center border-t-2 border-[#b0b3bf] bg-[#dadde8] pb-0.5">
      <span className="relative ml-9 grid size-[42px] place-items-center rounded-full bg-[linear-gradient(160deg,#f0b429,#f2680c_75%)] text-[16px] font-bold text-[#fff3dc]">
        UV
        <span className="absolute -top-[9px] left-5 grid size-7 place-items-center rounded-full bg-[#c42b1c] text-[18px] font-normal text-white">5</span>
      </span>
      <svg width="41" height="41" viewBox="0 0 41 41" className="ml-[230px]">
        <defs>
          <linearGradient id="win" x1="0" y1="0" x2="1" y2="1" gradientUnits="objectBoundingBox">
            <stop offset="0" stopColor="#4cc9fb" />
            <stop offset="1" stopColor="#0474d4" />
          </linearGradient>
        </defs>
        <path d="M1 0h18.500v19.500H0V1zM21 0h19l1 1v18.500H21zM0 21h19.500v20H1l-1-1zM21 21h20v19l-1 1H21z" fill="url(#win)" />
      </svg>
      <div className="ml-6 flex h-[55px] w-[383px] items-center rounded-full border border-b-2 border-[#c0c3ce] bg-[#f3f4f8] pl-4">
        <Line size={30} w={2.2} className="text-[#1b1b1b]">
          <circle cx="10.500" cy="10" r="7.500" />
          <path d="M16 16l5 5" />
        </Line>
        <span className="ml-4 text-[23.5px] text-[#5e5f63]">Search</span>
        <span className="mr-[9px] ml-auto">
          <Doodle />
        </span>
      </div>
      <div className="ml-1 flex">
        <Slot>
          <svg width="42" height="40" viewBox="0 0 42 40">
            <rect y="11" width="32" height="28" rx="1.500" fill="#2b2b2b" />
            <rect x="11" width="31" height="28" rx="1" fill="#f5f5f5" />
            <path d="M11 11h21v17H12l-1-1z" fill="#b5b5b5" />
          </svg>
        </Slot>
        <Slot>
          <span className="grid size-10 place-items-center rounded-full bg-[linear-gradient(#9b3bb5,#5b2d8f)]">
            <FaGithub size={30} className="rounded-full bg-[#6f2f9c] text-[#e9e4f2]" />
          </span>
        </Slot>
        <Slot className="bg-[#e9adab]" dot="w-[11px] bg-[#c42b1c]">
          <SiOpenai size={41} className="text-black" />
        </Slot>
        <Slot>
          <span className="grid size-[42px] place-items-center rounded-full bg-[#1d90ee] text-white">
            <FaDocker size={31} />
          </span>
        </Slot>
        <Slot>
          <svg width="42" height="40" viewBox="0 0 42 40">
            <defs>
              <linearGradient id="cpa" x1="0" y1="0" x2="0" y2="1">
                <stop offset="0" stopColor="#1a8fe8" />
                <stop offset=".55" stopColor="#3fbf8a" />
                <stop offset="1" stopColor="#f6d51f" />
              </linearGradient>
              <linearGradient id="cpb" x1="0" y1="0" x2="0" y2="1">
                <stop offset="0" stopColor="#b05cf0" />
                <stop offset=".5" stopColor="#ee5a90" />
                <stop offset="1" stopColor="#ffa45c" />
              </linearGradient>
            </defs>
            <path d="M20 0h6c4 0 5 3 6 7l1 4h-8c-3 0-4 2-5 5z" fill="#1b49c8" />
            <path d="M11 29h9l3-6v12c-1 2-2 3-3 3h-3c-3 0-4-4-6-9z" fill="#ee5630" />
            <path d="M13 0h15c-3 0-4 2-5 5l-6 19c-1 3-3 4-6 4H6c-5 0-7-4-5-10L6 6c1-4 3-6 7-6z" fill="url(#cpa)" />
            <path d="M29 39H17c3 0 4-2 5-5l5-18c1-3 3-5 6-5h3c5 0 7 4 5 10l-4 11c-1 4-4 7-8 7z" fill="url(#cpb)" />
          </svg>
        </Slot>
        <Slot dot="w-[11px] bg-[#7b7e88]">
          <svg width="42" height="42" viewBox="0 0 42 42">
            <path d="M30 0L1 27c-1 1-1 2 0 3l3 2c1 1 2 1 3 0L31 12z" fill="#0a6fb8" />
            <path d="M30 42L1 15c-1-1-1-2 0-3l3-2c1-1 2-1 3 0l24 20z" fill="#0d86d0" />
            <path d="M30 0l11 4 1 2v30l-1 2-11 4V0z" fill="#23a4f2" />
          </svg>
        </Slot>
        <Slot>
          <svg width="40" height="42" viewBox="0 0 40 42">
            <defs>
              <linearGradient id="st" x1="0" y1="0" x2="0" y2="1">
                <stop offset="0" stopColor="#0b63b0" />
                <stop offset="1" stopColor="#20365f" />
              </linearGradient>
            </defs>
            <path d="M9 9V3a2 2 0 0 1 2-2h18a2 2 0 0 1 2 2v6" fill="none" stroke="#2fc3f2" strokeWidth="3" />
            <path d="M0 6h40v30a6 6 0 0 1-6 6H6a6 6 0 0 1-6-6z" fill="url(#st)" />
            <path d="M9 9V5M31 9V5" stroke="#3fd0f7" strokeWidth="3" />
            <path d="M11 15h8v8h-8z" fill="#f25022" />
            <path d="M20.500 15h8v8h-8z" fill="#7fba00" />
            <path d="M11 24.500h8v8h-8z" fill="#00a4ef" />
            <path d="M20.500 24.500h8v8h-8z" fill="#ffb900" />
          </svg>
        </Slot>
        <Slot dot="w-[11px] bg-[#7b7e88]">
          <svg width="42" height="37" viewBox="0 0 42 37">
            <path d="M0 2a2 2 0 0 1 2-2h11l4 4v6H0z" fill="#dd9d0c" />
            <path d="M0 7h13l4-3h23a2 2 0 0 1 2 2v31H0z" fill="#fdc93c" />
            <path d="M7 37V29a4 4 0 0 1 4-4h20a4 4 0 0 1 4 4v8z" fill="#1480cf" />
            <path d="M13 31h16" stroke="#0b5fa0" strokeWidth="2" />
          </svg>
        </Slot>
        <Slot>
          <svg width="42" height="42" viewBox="0 0 42 42">
            <circle cx="21" cy="21" r="21" fill="#6d17d8" />
            <path d="M21 0a21 21 0 0 0 0 42z" fill="#a545f2" />
            <g fill="none" stroke="#dcc4f5" strokeWidth="2.300">
              <path d="M21 4a17 17 0 0 1 0 34M21 10a11 11 0 0 1 0 22M21 16a5 5 0 0 1 0 10" />
            </g>
          </svg>
        </Slot>
        <Slot className="w-[62px] border-2 border-[#cfd2df] bg-[#ecedf4] shadow-[6px_0_0_-1px_#ecedf4,7px_0_0_0_#cfd2df]" dot="w-[42px] bg-[#c42b1c]">
          <Opera size={39} from="#e0061f" to="#ff4b4b" />
        </Slot>
        <Slot dot="w-[11px] bg-[#7b7e88]">
          <svg width="42" height="32" viewBox="0 0 42 32">
            <path d="M0 0h42v32H0z" fill="#3a3a3a" />
            <path d="M0 0h14v5H0z" fill="#c9c9c9" />
            <path d="M14 0h14v5H14z" fill="#9a9a9a" />
            <path d="M28 0h14v5H28z" fill="#6f6f6f" />
            <path d="M6 11l8 7.500L6 26" fill="none" stroke="#cfcfcf" strokeWidth="4" />
            <path d="M20 23h14v4H20z" fill="#fff" />
          </svg>
        </Slot>
      </div>
      <div className="ml-[113px] flex items-center text-[#111]">
        <Line size={28} w={1.8}>
          <path d="M4 16.500L12 7.500l8 9" />
        </Line>
        <span className="ml-[29px] grid size-[27px] place-items-center rounded-full bg-[#f0190f] text-[16px] leading-none font-bold text-white">M</span>
        <Line size={30} w={1.3} className="ml-[27px]">
          <path d="M6 20a4.800 4.800 0 0 1-1.300-9.300C5.200 7 8.300 4.500 12 4.500c3.200 0 6 2 6.800 5.200A5.200 5.200 0 0 1 18 20z" fill="#e8e8e8" />
          <path d="M6.500 9c2-4 6-5.500 9.500-3.200 2 1.500 2.300 4 2.200 6-3-1-5 0-6.700 2.200z" fill="#8d8d8d" stroke="none" />
          <path d="M4 3l18 19" />
        </Line>
        <Line size={32} w={1.5} className="ml-[25px]">
          <path d="M1.500 9.500a15 15 0 0 1 21 0M4.500 12.800a10.500 10.500 0 0 1 15 0M7.700 16a6.200 6.200 0 0 1 8.600 0" />
          <circle cx="12" cy="19.500" r="1.300" fill="currentColor" />
        </Line>
        <Line size={30} w={1.3} className="ml-[10px]">
          <path d="M2 9v6h3.500l6 5V4l-6 5zM16 9l6.500 6.500M22.500 9L16 15.500" />
        </Line>
        <Line size={32} w={1.6} className="ml-[12px]">
          <path d="M11 5.500h8a2 2 0 0 1 2 2v9.500a2 2 0 0 1-2 2H4.500a2 2 0 0 1-2-2V13M22.500 10.500v3.500" />
          <path d="M6 1L2.500 8.500h3L4 13l5-6.500H6.500L8 1zM5.500 13l5-4v7.500h-5z" fill="currentColor" strokeWidth=".5" />
        </Line>
      </div>
      <div className="mr-[33px] ml-auto text-right text-[20.3px] leading-7 text-[#111]">
        3:15 PM
        <br />
        4/29/2025
      </div>
    </div>
  );
}

export default function App() {
  return (
    <div className="flex h-[1440px] w-[2160px] flex-col overflow-hidden bg-[#d7e1ea] font-['Open_Sans','Noto_Sans',sans-serif]">
      <div className="flex h-[1356px] shrink-0">
        <Rail />
        <div className="ml-[7px] flex w-[2066px] flex-col">
          <TabStrip />
          <AddressBar />
          <div className="mt-0.5 flex h-[59px] items-center gap-[11px] rounded-[14px] bg-white pl-[21px] text-[20px] text-[#3d3d3d]">
            <Octo />
            <span className="pt-[3px]">github.com</span>
          </div>
          <Page />
        </div>
      </div>
      <Taskbar />
    </div>
  );
}
